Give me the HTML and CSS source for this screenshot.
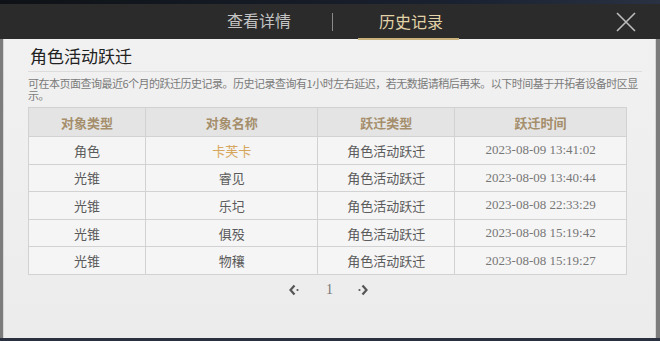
FILE: index.html
```html
<!DOCTYPE html>
<html lang="zh-CN">
<head>
    <meta charset="UTF-8">
    <title>跃迁记录</title>
    <link rel="stylesheet" href="styles.css">
</head>
<body>
    <div class="strip"></div>
    <div class="head">
        <a href="#" class="tab">查看详情</a>
        <span class="sep"></span>
        <a href="#" class="tab on">历史记录</a>
        <a href="#" class="close">
            <svg width="20" height="20" viewBox="0 0 20 20">
                <path d="M1 1 L19 19 M19 1 L1 19" stroke="#bdbdbd" stroke-width="1.6" fill="none"/>
            </svg>
        </a>
    </div>
    <div class="box">
        <div class="inner">
            <h2 class="tit">角色活动跃迁</h2>
            <p class="desc">可在本页面查询最近6个月的跃迁历史记录。历史记录查询有1小时左右延迟，若无数据请稍后再来。以下时间基于开拓者设备时区显示。</p>
            <table class="list">
                <colgroup>
                    <col width="117"/>
                    <col width="173"/>
                    <col width="137"/>
                    <col width="172"/>
                </colgroup>
                <thead>
                    <tr>
                        <th>对象类型</th>
                        <th>对象名称</th>
                        <th>跃迁类型</th>
                        <th>跃迁时间</th>
                    </tr>
                </thead>
                <tbody>
                    <tr>
                        <td>角色</td>
                        <td class="gold">卡芙卡</td>
                        <td>角色活动跃迁</td>
                        <td class="time">2023-08-09 13:41:02</td>
                    </tr>
                    <tr>
                        <td>光锥</td>
                        <td>睿见</td>
                        <td>角色活动跃迁</td>
                        <td class="time">2023-08-09 13:40:44</td>
                    </tr>
                    <tr>
                        <td>光锥</td>
                        <td>乐圮</td>
                        <td>角色活动跃迁</td>
                        <td class="time">2023-08-08 22:33:29</td>
                    </tr>
                    <tr>
                        <td>光锥</td>
                        <td>俱殁</td>
                        <td>角色活动跃迁</td>
                        <td class="time">2023-08-08 15:19:42</td>
                    </tr>
                    <tr>
                        <td>光锥</td>
                        <td>物穰</td>
                        <td>角色活动跃迁</td>
                        <td class="time">2023-08-08 15:19:27</td>
                    </tr>
                </tbody>
            </table>
            <div class="page">
                <a href="#" class="arr">
                    <svg width="12" height="12" viewBox="0 0 12 12">
                        <path d="M6.5 1.5 L2.5 6 L6.5 10.5" stroke="#555" stroke-width="2.2" fill="none"/>
                        <circle cx="9.5" cy="6" r="1.1" fill="#555"/>
                    </svg>
                </a>
                <span class="num">1</span>
                <a href="#" class="arr">
                    <svg width="12" height="12" viewBox="0 0 12 12">
                        <path d="M5.5 1.5 L9.5 6 L5.5 10.5" stroke="#555" stroke-width="2.2" fill="none"/>
                        <circle cx="2.5" cy="6" r="1.1" fill="#555"/>
                    </svg>
                </a>
            </div>
        </div>
    </div>
    <div class="foot"></div>
</body>
</html>
```

FILE: styles.css
```css
* {padding: 0; margin: 0; box-sizing: border-box;}
body {width: 660px; height: 341px; overflow: hidden; background: #262c38;
    font-family: "Noto Sans CJK SC", "Noto Sans", sans-serif;}
a {text-decoration: none;}
svg {display: block;}

.strip {height: 4px; background: linear-gradient(90deg, #0e1216, #1a2130 70%, #2a3142);}

.head {height: 35px; background: #2b2b2b; display: flex; align-items: center; position: relative;}
.head .tab {display: block; font-size: 16px; line-height: 33px; color: #c4c4c4; border-bottom: 2px solid transparent;}
.head .tab:first-child {margin-left: 227px;}
.head .tab.on {color: #e2d3a8; border-bottom-color: #c9b27b; padding: 0 16px 0 21px; margin-left: 25px; margin-top: 2px;}
.head .sep {display: block; width: 1px; height: 18px; background: #8a8a8a; margin-left: 41px;}
.head .close {display: block; margin-left: auto; margin-right: 24px; height: 20px;}

.box {height: 299px; background: #7c7c7c; padding: 0 4px 0 3px;}
.box .inner {height: 100%; background: linear-gradient(180deg, #f1f1f1, #ececec);
    border-left: 1px solid #d6d6d6; border-right: 1px solid #d6d6d6; padding: 0 0 0 24px;}

.tit {font-size: 17px; font-weight: normal; color: #222; line-height: 30px;
    padding: 2px 0 0 2px; width: 614px; border-bottom: 1px solid #dcdcdc;}
.desc {font-size: 11px; letter-spacing: -0.5px; line-height: 12px; color: #7a7a7a; width: 612px; margin-top: 5px;}

.list {width: 599px; border-collapse: collapse; margin-top: 6px; background: #f5f5f5;}
.list th, .list td {border: 1px solid #d2d2d2; text-align: center;}
.list th {height: 29px; background: #e4e4e4; font-size: 13px; font-weight: bold; color: #a58e6b;}
.list td {height: 27.6px; font-size: 13px; color: #5a5a5a;}
.list td.gold {color: #d6a65c;}
.list td.time {font-family: "Liberation Serif", serif; color: #777;}

.page {display: flex; justify-content: center; align-items: center; margin-top: 7px; padding-right: 26px;}
.page .arr {display: block;}
.page .num {font-family: "Liberation Serif", serif; font-size: 14px; line-height: 16px; color: #777; margin: 0 24px 0 26px;}

.foot {height: 3px; background: #2a3040;}
```
